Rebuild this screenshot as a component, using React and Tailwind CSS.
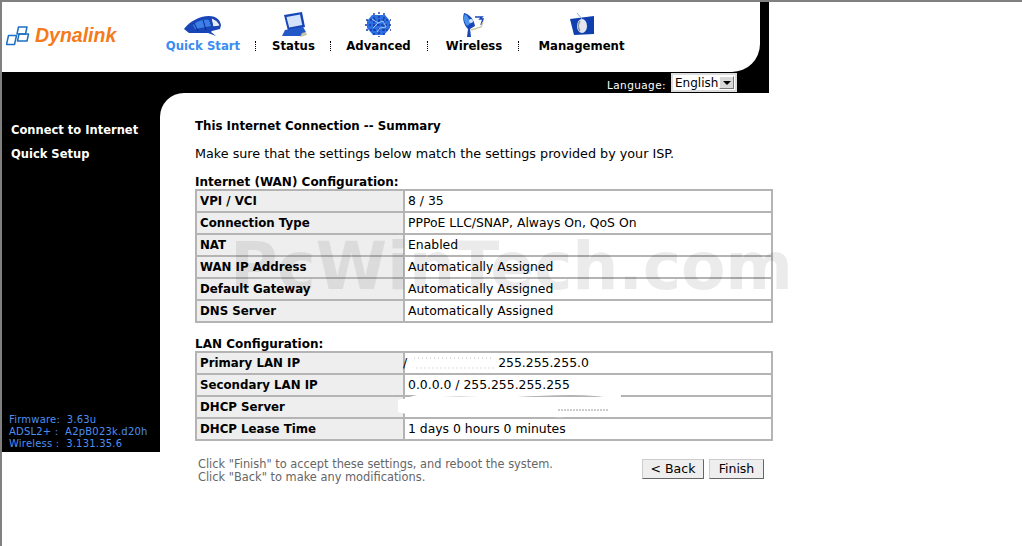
import React from 'react';

const font = "font-['DejaVu_Sans','Liberation_Sans',sans-serif]";

const wanRows = [
  ['VPI / VCI', '8 / 35'],
  ['Connection Type', 'PPPoE LLC/SNAP, Always On, QoS On'],
  ['NAT', 'Enabled'],
  ['WAN IP Address', 'Automatically Assigned'],
  ['Default Gateway', 'Automatically Assigned'],
  ['DNS Server', 'Automatically Assigned'],
];

const lanRows = [
  ['Primary LAN IP', <span className="ml-[-5px]">/<span className="ml-[91px]">255.255.255.0</span></span>],
  ['Secondary LAN IP', '0.0.0.0 / 255.255.255.255'],
  ['DHCP Server', ''],
  ['DHCP Lease Time', '1 days 0 hours 0 minutes'],
];

function Logo() {
  return (
    <div className="flex w-[115px] items-center">
      <svg width="24" height="20" viewBox="0 0 24 20" fill="none" stroke="#1c6fc4" strokeWidth="1.5" strokeLinejoin="round">
        <path d="M2.5 9.5h8l-2 9h-8z" />
        <path d="M12.5 1h8.5l-1.5 7h-8.5z" />
        <path d="M13 8h9.5l-1.5 7h-9.5z" />
      </svg>
      <span className="ml-[5px] font-['Liberation_Sans'] text-[19.5px] font-bold italic leading-none text-[#f47a1a]">Dynalink</span>
    </div>
  );
}

function QuickIcon() {
  return (
    <svg width="40" height="22" viewBox="0 0 40 22">
      <path d="M1 14C6 7 16 1 26 1c6 0 11 3 12 9l-1 4-8 2-1 1 5 4-8-3H6z" fill="#1846b8" />
      <path d="M10 10c4-4 10-6 16-5l2 6-16 3z" fill="#3d7fe8" />
      <path d="M28 3c4 1 8 4 9 8l-7 1z" fill="#e6ecf8" stroke="#1a3aa0" />
      <path d="M20 5l3 10M11 8l4 8" stroke="#0d2a86" fill="none" />
    </svg>
  );
}

function StatusIcon() {
  return (
    <svg width="26" height="25" viewBox="0 0 26 25">
      <path d="M3 3l18-3 3 15-17 4z" fill="#1846b8" />
      <path d="M5.500 5l13.500-2.500 2.200 10.500-13 2.500z" fill="#d4e3fb" />
      <path d="M4 18l18-3 3 5-4 4H1z" fill="#2358c8" />
      <path d="M21 21l4-1 1 3-7 2z" fill="#c9c3a6" />
    </svg>
  );
}

function AdvancedIcon() {
  return (
    <svg width="27" height="25" viewBox="0 0 27 25">
      <path d="M7 3h13l5 6v7l-6 7H8l-6-7V9z" fill="#2c6fe0" />
      <path d="M9 1v23M14 0v25M19 1v23M1 8h25M0 13h27M1 18h25" stroke="#1838a8" strokeDasharray="2 2" strokeWidth="1.4" />
      <path d="M7 7l6 4 5-2 3 6-6 1-3 4M13 11l-5 5" stroke="#9cc6f8" fill="none" />
    </svg>
  );
}

function WirelessIcon() {
  return (
    <svg width="24" height="25" viewBox="0 0 24 25">
      <path d="M2 1c5 1 10 6 11 13l-5 3 1 8H5l1-8C2 13 0 7 2 1z" fill="#1846b8" />
      <path d="M3 2c3 2 5 6 6 9l-4 3C2 10 1 6 3 2z" fill="#4a94ee" />
      <circle cx="9" cy="9" r="2" fill="#d8e6f8" />
      <path d="M13 5h7l-2 2h3l-2 6" stroke="#1846b8" fill="none" strokeWidth="1.5" />
      <path d="M9 18l10-3 2-5" stroke="#cfc9a8" fill="none" strokeWidth="1.5" />
    </svg>
  );
}

function ManagementIcon() {
  return (
    <svg width="26" height="24" viewBox="0 0 26 24">
      <path d="M1 6l24-3v18l-20 1z" fill="#0f3fae" />
      <ellipse cx="13" cy="13" rx="5" ry="7" fill="#e4e8ee" />
      <path d="M11 8c-2 3-2 7 0 10" stroke="#8d96a8" fill="none" strokeWidth="1.5" />
      <path d="M8 0l5 6" stroke="#8cb0e8" />
    </svg>
  );
}

function Separator() {
  return <div className="h-[10px] w-px border-l border-dotted border-black" />;
}

function NavItem({ icon, label, width, active }) {
  return (
    <div className="flex flex-col items-center" style={{ width }}>
      <div className="flex h-[26px] items-end justify-center">{icon}</div>
      <div className={`mt-px whitespace-nowrap text-[11.7px] font-bold leading-[16px] ${active ? 'text-[#3a8df0]' : 'text-black'}`}>{label}</div>
    </div>
  );
}

function InfoTable({ rows }) {
  return (
    <div className="w-[578px] border-x-2 border-b-2 border-[#b4b4b4]">
      {rows.map(([name, value]) => (
        <div key={name} className="flex h-[22px] border-t-2 border-[#b4b4b4]">
          <div className="flex w-[206px] items-center bg-[#eeeeee] pl-[3px] pt-px text-[11.8px] font-bold text-black">{name}</div>
          <div className="flex flex-1 items-center border-l-2 border-[#b4b4b4] pl-[3px] text-[12.4px] text-black">{value}</div>
        </div>
      ))}
    </div>
  );
}

export default function App() {
  return (
    <div className={`relative h-[546px] w-full overflow-hidden border-l-2 border-t-2 border-[#808080] bg-white ${font}`}>
      <div className="w-[767px]">
        <div className="bg-black pr-[9px]">
          <div className="flex h-[70px] rounded-br-[28px] bg-white">
            <div className="ml-[4px] mt-[24px]"><Logo /></div>
            <div className="ml-[44px] mt-[9px] flex items-start">
              <NavItem icon={<QuickIcon />} label="Quick Start" width={76} active />
              <div className="ml-[14px] mt-[30px]"><Separator /></div>
              <div className="ml-[16px]"><NavItem icon={<StatusIcon />} label="Status" width={43} /></div>
              <div className="ml-[15px] mt-[30px]"><Separator /></div>
              <div className="ml-[15px]"><NavItem icon={<AdvancedIcon />} label="Advanced" width={65} /></div>
              <div className="ml-[16px] mt-[30px]"><Separator /></div>
              <div className="ml-[16px]"><NavItem icon={<WirelessIcon />} label="Wireless" width={60} /></div>
              <div className="ml-[14px] mt-[30px]"><Separator /></div>
              <div className="ml-[20px]"><NavItem icon={<ManagementIcon />} label="Management" width={85} /></div>
            </div>
          </div>
        </div>

        <div className="flex h-[21px] items-start justify-end bg-black pr-[32px]">
          <span className="mr-[5px] mt-[6px] text-[10.5px] leading-[14px] tracking-[0.4px] text-white">Language:</span>
          <div className="mt-px flex h-[19px] w-[66px] items-center justify-between border-2 border-[#dddddd] bg-white pl-[2px] pr-px text-[12px] text-black">
            English
            <div className="flex h-[13px] w-[15px] items-center justify-center border border-[#777777] border-l-white border-t-white bg-[#d8d8d8]">
              <div className="h-0 w-0 border-x-[4px] border-t-[4px] border-x-transparent border-t-black" />
            </div>
          </div>
        </div>

        <div className="flex">
          <div className="flex h-[359px] w-[158px] shrink-0 flex-col justify-between bg-black pb-[2px] pl-[7px] pt-[29px]">
            <div className="ml-[2px] text-[11.5px] font-bold text-white">
              <div className="h-[24px] leading-[16px]">Connect to Internet</div>
              <div className="leading-[16px]">Quick Setup</div>
            </div>
            <div className="text-[10px] leading-[12px] tracking-[0.2px] text-[#4d8ff0]">
              <div>Firmware:&nbsp; 3.63u</div>
              <div>ADSL2+ :&nbsp; A2pB023k.d20h</div>
              <div>Wireless :&nbsp; 3.131.35.6</div>
            </div>
          </div>

          <div className="w-[609px] bg-black">
            <div className="h-[451px] w-[620px] rounded-tl-[24px] bg-white pl-[35px] pt-[25px]">
              <div className="text-[11.8px] font-bold leading-[16px] text-black">This Internet Connection -- Summary</div>
              <div className="mt-[12px] text-[12.75px] leading-[16px] text-black">Make sure that the settings below match the settings provided by your ISP.</div>
              <div className="mt-[13px] text-[12px] font-bold leading-[14px] text-black">Internet (WAN) Configuration:</div>
              <InfoTable rows={wanRows} />
              <div className="mt-[14px] text-[12px] font-bold leading-[14px] text-black">LAN Configuration:</div>
              <InfoTable rows={lanRows} />
              <div className="mt-[18px] flex w-[570px] items-start justify-between pl-[3px]">
                <div className="-mt-px text-[11.4px] leading-[13px] text-[#666666]">
                  <div>Click "Finish" to accept these settings, and reboot the system.</div>
                  <div>Click "Back" to make any modifications.</div>
                </div>
                <div className="mr-px flex gap-[5px]">
                  <button className="h-[20px] w-[62px] border border-[#cccccc] border-b-[#666666] border-r-[#666666] bg-[#eeeeee] text-[12.5px] leading-none text-black">&lt; Back</button>
                  <button className="h-[20px] w-[55px] border border-[#cccccc] border-b-[#666666] border-r-[#666666] bg-[#eeeeee] text-[12.5px] leading-none text-black">Finish</button>
                </div>
              </div>
            </div>
          </div>
        </div>
      </div>

      {/* watermark sits over the tables */}
      <div className="pointer-events-none absolute left-[228px] top-[232px] whitespace-nowrap text-[65px] font-bold leading-none tracking-[-0.3px] text-black/[0.08]">PcWinTech.com</div>

      {/* scribbled out addresses */}
      <svg className="pointer-events-none absolute left-[396px] top-[348px]" width="230" height="72" viewBox="0 0 230 72" fill="none">
        <path d="M16 8h78" stroke="#bdbdbd" strokeDasharray="1 3" />
        <path d="M18 18h78" stroke="#dddddd" strokeDasharray="2 2" />
        <path d="M6 52c40-14 70-6 110-8s70-4 104 2" stroke="#ffffff" strokeWidth="6" strokeLinecap="round" />
        <path d="M4 56c50 8 90-4 130 2s60-2 76-4" stroke="#ffffff" strokeWidth="14" strokeLinecap="round" />
        <path d="M160 60h50" stroke="#9a9a9a" strokeDasharray="2 1" />
      </svg>
    </div>
  );
}
